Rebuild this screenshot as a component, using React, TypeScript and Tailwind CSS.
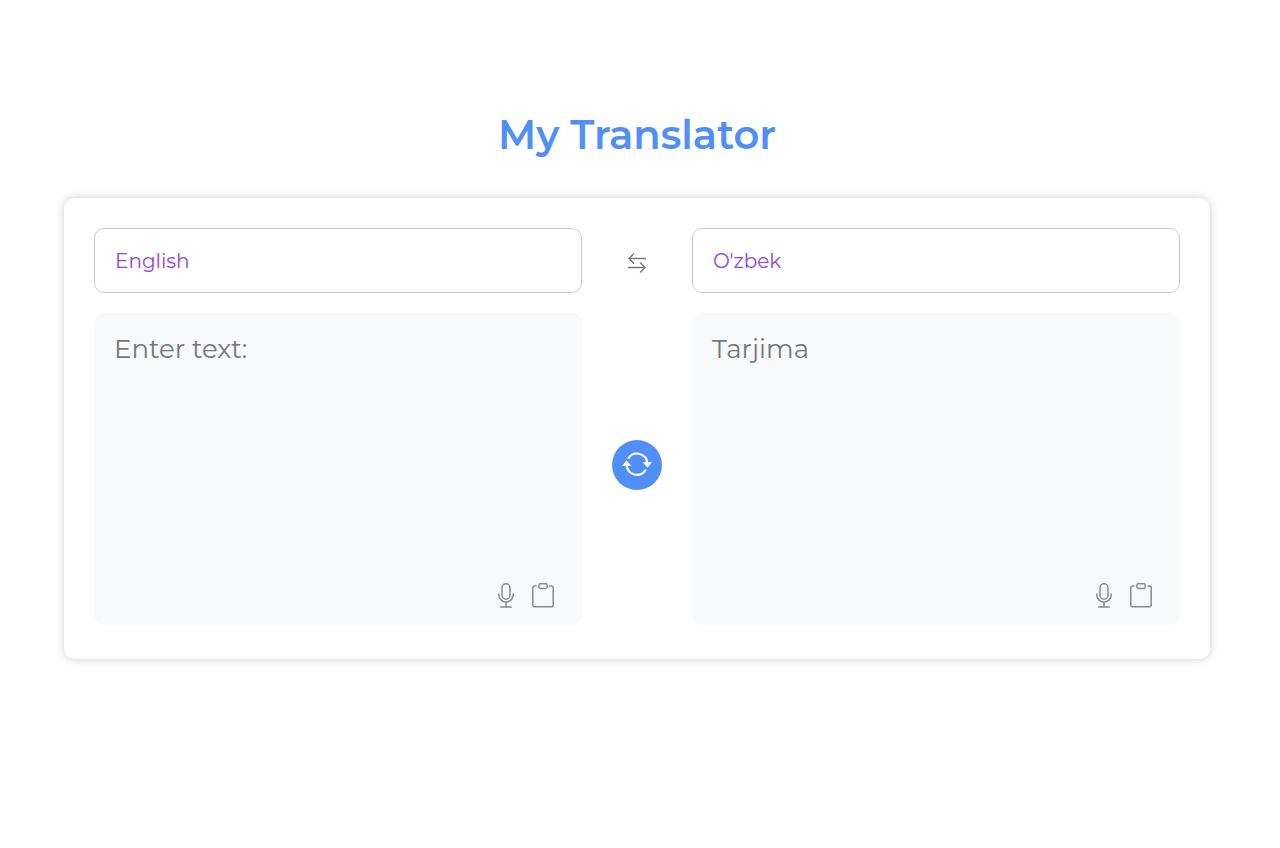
import { useState } from 'react';

const LANGUAGES = ['English', "O'zbek"];

function SwapIcon() {
  return (
    <svg width="18" height="20" viewBox="0 0 18 20" fill="none" stroke="#777" strokeWidth="1.4" aria-hidden="true">
      <path d="M18 5.5H1M6 .5 1 5.5l5 5" />
      <path d="M0 14.5h17M12 9.5l5 5-5 5" />
    </svg>
  );
}

function TranslateIcon() {
  return (
    <svg width="30" height="26" viewBox="0 0 30 26" aria-hidden="true">
      <g fill="none" stroke="#fff" strokeWidth="2.1" strokeLinecap="round">
        <path d="M6.6 6A10.3 10.3 0 0 1 25.3 11" />
        <path d="M23.4 18.4A10.3 10.3 0 0 1 4.7 13.4" />
      </g>
      <path d="M20.8 10.2h9.2L25.4 15.8zM0 14h9.2L4.6 8.2z" fill="#fff" />
    </svg>
  );
}

function MicIcon() {
  return (
    <svg width="16" height="25" viewBox="0 0 16 25" fill="none" stroke="#8a8a8a" strokeWidth="1.5" aria-hidden="true">
      <rect x="4" y=".8" width="8" height="15.4" rx="4" />
      <path d="M.8 10.5v1.3a7.2 7.2 0 0 0 14.4 0v-1.3M8 19v5M2.2 24h11.6" />
    </svg>
  );
}

function ClipboardIcon() {
  return (
    <svg width="22" height="25" viewBox="0 0 22 25" fill="none" stroke="#8a8a8a" strokeWidth="1.5" aria-hidden="true">
      <rect x="6.8" y=".8" width="8.4" height="4.6" rx="1.6" />
      <path d="M4.6 3H2.8a2 2 0 0 0-2 2v16.8a2 2 0 0 0 2 2h16.4a2 2 0 0 0 2-2V5a2 2 0 0 0-2-2h-1.8" />
    </svg>
  );
}

function LanguageSelect({ label, value, onChange }: { label: string; value: string; onChange: (v: string) => void }) {
  return (
    <select
      aria-label={label}
      value={value}
      onChange={(e) => onChange(e.target.value)}
      className="h-[65px] w-full min-w-0 appearance-none rounded-[10px] border border-[#cccccc] bg-white px-5 text-xl text-[#8f45e0]"
    >
      {LANGUAGES.map((l) => (
        <option key={l}>{l}</option>
      ))}
    </select>
  );
}

function TextPanel({ label, placeholder, readOnly = false }: { label: string; placeholder: string; readOnly?: boolean }) {
  return (
    <div className="flex h-78 min-w-0 flex-col rounded-[10px] bg-[#f8f9fb] pt-5 pb-[17px]">
      <textarea
        aria-label={label}
        placeholder={placeholder}
        readOnly={readOnly}
        className="w-full flex-1 resize-none bg-transparent px-5 text-[26px] leading-8 text-gray-800 outline-none placeholder:text-[#777777]"
      />
      <div className="flex items-center justify-end gap-[18px] pr-7">
        <button type="button" aria-label="Voice">
          <MicIcon />
        </button>
        <button type="button" aria-label="Copy">
          <ClipboardIcon />
        </button>
      </div>
    </div>
  );
}

export default function App() {
  const [from, setFrom] = useState('English');
  const [to, setTo] = useState("O'zbek");
  const swap = () => {
    setFrom(to);
    setTo(from);
  };

  return (
    <main className="min-h-screen bg-white pt-[111px] pr-[70px] pl-16 font-[Montserrat,Inter,sans-serif]">
      <h1 className="text-center text-[40px] leading-12 font-semibold text-[#508ff7]">My Translator</h1>
      <section className="mt-[39px] grid grid-cols-[minmax(0,1fr)_50px_minmax(0,1fr)] gap-x-[30px] gap-y-5 rounded-[10px] bg-white px-[30px] pt-[30px] pb-[34px] shadow-[0_0_10px_rgba(0,0,0,0.2)]">
        <LanguageSelect label="Source language" value={from} onChange={setFrom} />
        <button type="button" aria-label="Swap languages" onClick={swap} className="flex items-center justify-center pt-1">
          <SwapIcon />
        </button>
        <LanguageSelect label="Target language" value={to} onChange={setTo} />
        <TextPanel label="Text to translate" placeholder="Enter text:" />
        <button
          type="button"
          aria-label="Translate"
          className="mb-2 flex size-[50px] items-center justify-center self-center rounded-full bg-[#508ff7]"
        >
          <TranslateIcon />
        </button>
        <TextPanel label="Translation" placeholder="Tarjima" readOnly />
      </section>
    </main>
  );
}
